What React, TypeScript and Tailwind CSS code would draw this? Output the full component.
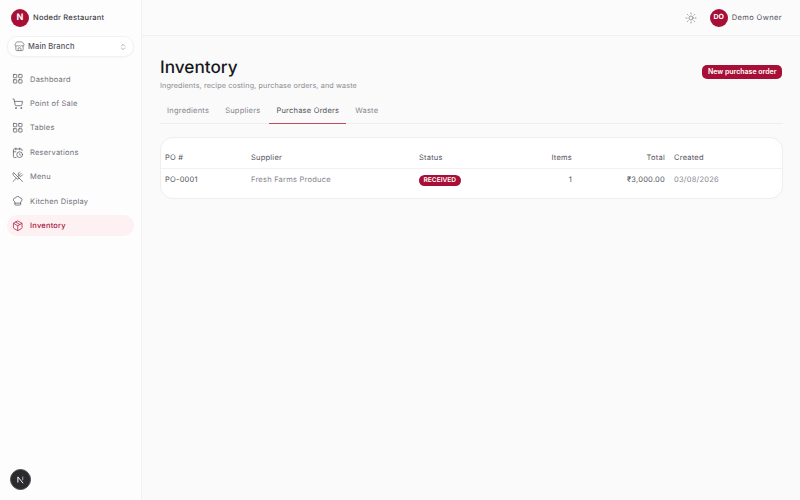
import { CalendarClock, ChefHat, ChevronsUpDown, LayoutGrid, Package, ShoppingCart, Store, Sun, UtensilsCrossed } from "lucide-react";

const navItems = [
  { label: "Dashboard", icon: LayoutGrid },
  { label: "Point of Sale", icon: ShoppingCart },
  { label: "Tables", icon: LayoutGrid },
  { label: "Reservations", icon: CalendarClock },
  { label: "Menu", icon: UtensilsCrossed },
  { label: "Kitchen Display", icon: ChefHat },
  { label: "Inventory", icon: Package, active: true },
];

const tabs = ["Ingredients", "Suppliers", "Purchase Orders", "Waste"];

export default function App() {
  return (
    <div className="flex h-[500px] w-[800px] overflow-hidden bg-[#fafafa] font-['Inter',sans-serif] text-[#27272a] antialiased [text-rendering:geometricPrecision]">
      {/* Sidebar */}
      <aside className="relative flex w-[142px] shrink-0 flex-col border-r border-[#f1f1f1] bg-[#fdfdfd] px-[7px]">
        <div className="flex h-[35px] items-center gap-[4px] pl-1">
          <div className="flex h-[18px] w-[18px] items-center justify-center rounded-full bg-[#a80f36] text-[9px] font-bold text-white">N</div>
          <span className="text-[7.5px] font-medium tracking-[0.03em] text-[#3f3f46]">Nodedr Restaurant</span>
        </div>

        <button className="mt-px flex h-[21px] w-[127px] items-center gap-[3px] rounded-[10px] border border-[#f1f1f1] bg-white pl-[6px] pr-[6px] shadow-[0_1px_2px_rgba(0,0,0,0.03)]">
          <Store className="h-[11px] w-[11px] text-[#71717a]" strokeWidth={1.6} />
          <span className="text-[7.5px] font-medium tracking-[0.02em] text-[#52525b]">Main Branch</span>
          <ChevronsUpDown className="ml-auto h-[8px] w-[8px] text-[#8a8a92]" />
        </button>

        <nav className="mt-[11.5px] flex flex-col gap-[3px]">
          {navItems.map(({ label, icon: Icon, active }) => (
            <div
              key={label}
              className={`flex h-[21.4px] w-[127px] items-center gap-[6.5px] rounded-[10px] pl-[5px] text-[7.5px] tracking-[0.03em] ${
                active ? "bg-[#fdf1f4] font-medium text-[#a80f36]" : "text-[#71717a]"
              }`}
            >
              <Icon className={`h-[11.5px] w-[11.5px] shrink-0 ${active ? "text-[#a80f36]" : "text-[#52525b]"}`} strokeWidth={1.5} />
              <span>{label}</span>
            </div>
          ))}
        </nav>

        <div className="absolute bottom-[10px] left-[10px] flex h-[21px] w-[21px] items-center justify-center rounded-full border border-[#4a4a4e] bg-[#2b2b2e]">
          <svg viewBox="0 0 12 12" className="h-[9px] w-[9px]" fill="none" stroke="white">
            <path d="M2.5 10V2.5L9.5 11" strokeWidth="1.3" />
            <path d="M9 2v5" strokeWidth="1.1" stroke="#cfcfcf" />
          </svg>
        </div>
      </aside>

      {/* Main */}
      <main className="flex min-w-0 flex-1 flex-col">
        <header className="flex h-[36px] shrink-0 items-center justify-end border-b border-[#f1f1f1] bg-[#fbfbfb] pr-[18px]">
          <Sun className="h-[12px] w-[12px] text-[#71717a]" strokeWidth={1.4} />
          <div className="ml-[13px] flex h-[18px] w-[18px] items-center justify-center rounded-full bg-[#a80f36] text-[7px] font-bold text-white">DO</div>
          <span className="ml-[4px] text-[7.5px] tracking-[0.05em] text-[#52525b]">Demo Owner</span>
        </header>

        <div className="flex flex-col pl-[18px] pr-[17px]">
          <div className="mt-[19px] flex items-start justify-between">
            <div>
              <h1 className="pt-px text-[17.2px] font-medium leading-[23px] text-[#18181b]">Inventory</h1>
              <p className="text-[7.2px] leading-[13px] tracking-[0.02em] text-[#8a8a92]">Ingredients, recipe costing, purchase orders, and waste</p>
            </div>
            <button className="mr-px mt-[10px] h-[14px] rounded-[5px] bg-[#a80f36] px-[5.5px] text-[7px] font-semibold leading-[14px] text-white">New purchase order</button>
          </div>

          <div className="mt-[5px] flex h-[27px] gap-[2px] border-b border-[#eeeeee]">
            {tabs.map((tab) => (
              <div
                key={tab}
                className={`flex h-[27px] items-center px-[7px] pt-px text-[7.5px] tracking-[0.03em] ${
                  tab === "Purchase Orders" ? "border-b border-[#bd4a62] text-[#52525b]" : "text-[#85858d]"
                }`}
              >
                {tab}
              </div>
            ))}
          </div>

          <div className="mt-[13px] h-[62px] w-full rounded-[13px] border border-[#eeeeee] bg-white pt-[9px]">
            <div className="flex h-[22px] items-center border-b border-[#f1f1f1] pl-[4px] text-[7.5px] tracking-[0.03em] text-[#52525b]">
              <span className="w-[86px]">PO #</span>
              <span className="w-[168px]">Supplier</span>
              <span className="w-[98px]">Status</span>
              <span className="w-[55px] text-right">Items</span>
              <span className="w-[93px] text-right">Total</span>
              <span className="ml-[9px]">Created</span>
            </div>
            <div className="flex h-[22px] items-center pl-[4px] text-[7.5px] tracking-[0.03em] text-[#85858d]">
              <span className="w-[86px] text-[#52525b]">PO-0001</span>
              <span className="w-[168px]">Fresh Farms Produce</span>
              <span className="w-[98px]">
                <span className="inline-flex h-[11px] items-center rounded-full bg-[#a80f36] px-[4.5px] text-[6.6px] font-semibold tracking-normal text-white">RECEIVED</span>
              </span>
              <span className="w-[55px] text-right text-[#52525b]">1</span>
              <span className="w-[93px] text-right text-[#52525b]">₹3,000.00</span>
              <span className="ml-[9px]">03/08/2026</span>
            </div>
          </div>
        </div>
      </main>
    </div>
  );
}
